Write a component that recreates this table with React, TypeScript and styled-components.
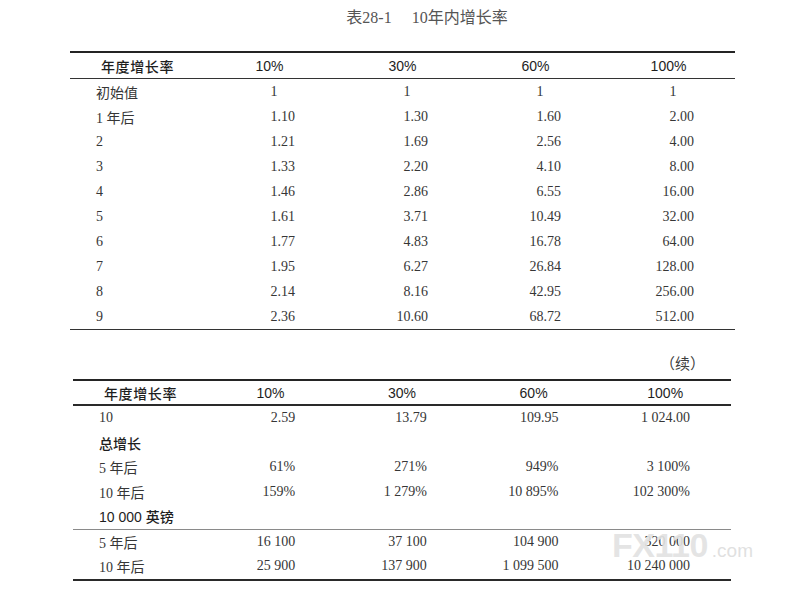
import styled, { createGlobalStyle } from "styled-components";

type Cells = string[];

interface Block {
  kind: "row" | "section";
  cells: Cells;
}

const growthRates = ["10%", "30%", "60%", "100%"];

const firstRows: Cells[] = [
  ["初始值", "1", "1", "1", "1"],
  ["1 年后", "1.10", "1.30", "1.60", "2.00"],
  ["2", "1.21", "1.69", "2.56", "4.00"],
  ["3", "1.33", "2.20", "4.10", "8.00"],
  ["4", "1.46", "2.86", "6.55", "16.00"],
  ["5", "1.61", "3.71", "10.49", "32.00"],
  ["6", "1.77", "4.83", "16.78", "64.00"],
  ["7", "1.95", "6.27", "26.84", "128.00"],
  ["8", "2.14", "8.16", "42.95", "256.00"],
  ["9", "2.36", "10.60", "68.72", "512.00"],
];

// split where the thin rule runs across the continued table
const secondRows: Block[] = [
  { kind: "row", cells: ["10", "2.59", "13.79", "109.95", "1 024.00"] },
  { kind: "section", cells: ["总增长"] },
  { kind: "row", cells: ["5 年后", "61%", "271%", "949%", "3 100%"] },
  { kind: "row", cells: ["10 年后", "159%", "1 279%", "10 895%", "102 300%"] },
  { kind: "section", cells: ["10 000 英镑"] },
  { kind: "row", cells: ["5 年后", "16 100", "37 100", "104 900", "320 000"] },
  { kind: "row", cells: ["10 年后", "25 900", "137 900", "1 099 500", "10 240 000"] },
];

const GlobalStyle = createGlobalStyle`
  html, body {
    margin: 0;
    padding: 0;
    background: #ffffff;
  }
  body {
    font-family: "Liberation Serif", "Noto Sans CJK SC", serif;
    color: #333333;
  }
`;

const Page = styled.div`
  position: relative;
  width: 798px;
  height: 600px;
  padding-left: 70px;
  box-sizing: border-box;
  overflow: hidden;
`;

const Title = styled.div`
  width: 665px;
  height: 31px;
  padding-left: 49px;
  box-sizing: border-box;
  display: flex;
  justify-content: center;
  align-items: center;
  gap: 20px;
  font-family: "Liberation Serif", "Noto Sans CJK SC", serif;
  font-size: 16px;
  color: #555555;
`;

const Sheet = styled.div<{ $offset: number; $width: number; $top: number }>`
  margin-left: ${(p) => p.$offset}px;
  margin-top: ${(p) => p.$top}px;
  width: ${(p) => p.$width}px;
  border-top: 2px solid #242424;
`;

const Sheet2 = styled(Sheet)`
  border-bottom: 2px solid #2a2a2a;
`;

const HeadRow = styled.div<{ $h: number; $rule: "thin" | "thick" }>`
  display: grid;
  grid-template-columns: repeat(5, 1fr);
  align-items: center;
  height: ${(p) => p.$h}px;
  border-bottom: ${(p) =>
    p.$rule === "thin" ? "1px solid #333333" : "2px solid #2a2a2a"};
  font-family: "Liberation Sans", "Noto Sans CJK SC", sans-serif;
  font-size: 14px;
  color: #1e1e1e;
`;

const HeadLabel = styled.div`
  padding-left: 31px;
  letter-spacing: 0.6px;
  font-weight: 500;
`;

const HeadRate = styled.div`
  text-align: center;
`;

const Body = styled.div<{ $rule?: "thin" | "faint" }>`
  border-bottom: ${(p) =>
    p.$rule === "thin"
      ? "1px solid #333333"
      : p.$rule === "faint"
      ? "1px solid #8a8a8a"
      : "none"};
`;

const Row = styled.div<{ $h: number }>`
  display: grid;
  grid-template-columns: repeat(5, 1fr);
  align-items: center;
  height: ${(p) => p.$h}px;
  font-size: 14px;
  color: #363636;
`;

const Label = styled.div`
  padding-left: 26px;
  white-space: nowrap;
`;

const Section = styled(Label)`
  font-family: "Liberation Sans", "Noto Sans CJK SC", sans-serif;
  color: #1e1e1e;
  font-weight: 500;
`;

const Num = styled.div`
  text-align: right;
  padding-right: 41px;
  white-space: nowrap;
`;

const Pad = styled.span`
  visibility: hidden;
`;

const Continued = styled.div`
  margin-left: 3px;
  margin-top: 24px;
  width: 658px;
  height: 20px;
  line-height: 20px;
  padding-right: 26px;
  box-sizing: border-box;
  text-align: right;
  font-size: 15px;
  color: #404040;
`;

const Watermark = styled.div`
  position: absolute;
  left: 612px;
  top: 528px;
  display: flex;
  align-items: baseline;
  pointer-events: none;
`;

const MarkBig = styled.span`
  font-family: "Liberation Sans", sans-serif;
  font-weight: 700;
  font-size: 34px;
  line-height: 1;
  letter-spacing: -0.5px;
  color: rgba(226, 226, 226, 0.93);
`;

const MarkSmall = styled.span`
  margin-left: 4px;
  font-family: "Liberation Sans", sans-serif;
  font-size: 19px;
  line-height: 1;
  color: rgba(222, 222, 222, 0.95);
`;

const Value = ({ text }: { text: string }) =>
  text === "1" ? (
    <Num>
      1<Pad>.00</Pad>
    </Num>
  ) : (
    <Num>{text}</Num>
  );

const DataRow = ({ cells, h }: { cells: Cells; h: number }) => (
  <Row $h={h}>
    <Label>{cells[0]}</Label>
    {cells.slice(1).map((c, i) => (
      <Value key={i} text={c} />
    ))}
  </Row>
);

const Header = ({ h, rule }: { h: number; rule: "thin" | "thick" }) => (
  <HeadRow $h={h} $rule={rule}>
    <HeadLabel>年度增长率</HeadLabel>
    {growthRates.map((r) => (
      <HeadRate key={r}>{r}</HeadRate>
    ))}
  </HeadRow>
);

export default function App() {
  const before = secondRows.slice(0, 5);
  const after = secondRows.slice(5);

  const renderBlock = (b: Block, i: number) =>
    b.kind === "section" ? (
      <Row key={i} $h={24.5}>
        <Section>{b.cells[0]}</Section>
      </Row>
    ) : (
      <DataRow key={i} cells={b.cells} h={24.5} />
    );

  return (
    <>
      <GlobalStyle />
      <Page>
        <Title>
          <span>表28-1</span>
          <span>10年内增长率</span>
        </Title>

        <Sheet $offset={0} $width={665} $top={20}>
          <Header h={25} rule="thin" />
          <Body $rule="thin">
            {firstRows.map((r, i) => (
              <DataRow key={i} cells={r} h={25} />
            ))}
          </Body>
        </Sheet>

        <Continued>（续）</Continued>

        <Sheet2 $offset={3} $width={658} $top={5}>
          <Header h={23} rule="thick" />
          <Body $rule="faint">{before.map(renderBlock)}</Body>
          <Body>{after.map((b, i) => renderBlock(b, i + 10))}</Body>
        </Sheet2>

        <Watermark>
          <MarkBig>FX110</MarkBig>
          <MarkSmall>.com</MarkSmall>
        </Watermark>
      </Page>
    </>
  );
}
